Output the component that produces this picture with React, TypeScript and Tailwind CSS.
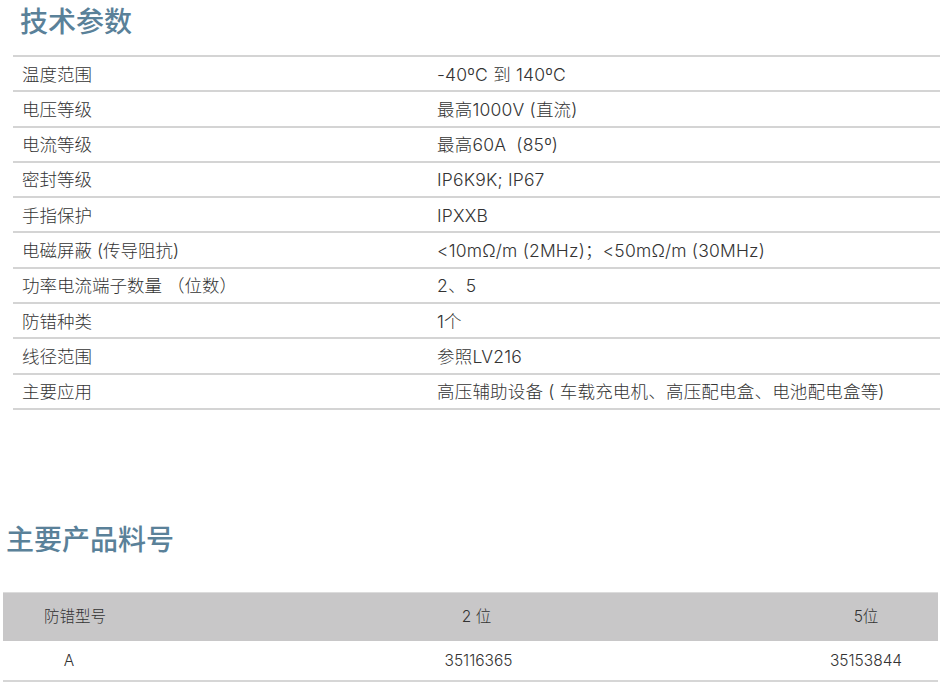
const specs: [string, string][] = [
  ['温度范围', '-40ºC 到 140ºC'],
  ['电压等级', '最高1000V (直流)'],
  ['电流等级', '最高60A  (85º)'],
  ['密封等级', 'IP6K9K; IP67'],
  ['手指保护', 'IPXXB'],
  ['电磁屏蔽 (传导阻抗)', '<10mΩ/m (2MHz)；<50mΩ/m (30MHz)'],
  ['功率电流端子数量 （位数）', '2、5'],
  ['防错种类', '1个'],
  ['线径范围', '参照LV216'],
  ['主要应用', '高压辅助设备 ( 车载充电机、高压配电盒、电池配电盒等)'],
]

const font = { fontFamily: 'Inter, "Noto Sans CJK SC", sans-serif' }

export default function App() {
  return (
    <div className="w-[940px] h-[689px] bg-white overflow-hidden text-[#333]" style={font}>
      <h2 className="pl-[20px] text-[28px] leading-[44px] mb-[11px] text-[#5a8199] font-medium">技术参数</h2>
      <div className="ml-[13px] border-t-2 border-[#d4d4d4]">
        {specs.map(([k, v]) => (
          <div key={k} className="flex h-[35.3px] border-b-2 border-[#d4d4d4] items-center pt-[2px] text-[17.5px] font-light">
            <div className="w-[424px] pl-[9px] whitespace-pre">{k}</div>
            <div className="whitespace-pre tracking-[0.2px]">{v}</div>
          </div>
        ))}
      </div>

      <h2 className="mt-[108px] pl-[6px] text-[28px] leading-[44px] text-[#5a8199] font-medium">主要产品料号</h2>
      <div className="mt-[30px] mx-[3px] w-[935px] text-[15.5px] font-light">
        <div className="flex h-[49px] items-center bg-[#c8c7c8] border-t border-[#dcdcdc]">
          <div className="w-[140px] text-center pl-[4px]">防错型号</div>
          <div className="flex-1 text-center pl-[16px]">2 位</div>
          <div className="w-[144px] text-center">5位</div>
        </div>
        <div className="flex h-[41px] items-center border-b-2 border-[#d6d6d6]">
          <div className="w-[140px] text-center pr-[8px]">A</div>
          <div className="flex-1 text-center pl-[20px]">35116365</div>
          <div className="w-[144px] text-center">35153844</div>
        </div>
      </div>
    </div>
  )
}
